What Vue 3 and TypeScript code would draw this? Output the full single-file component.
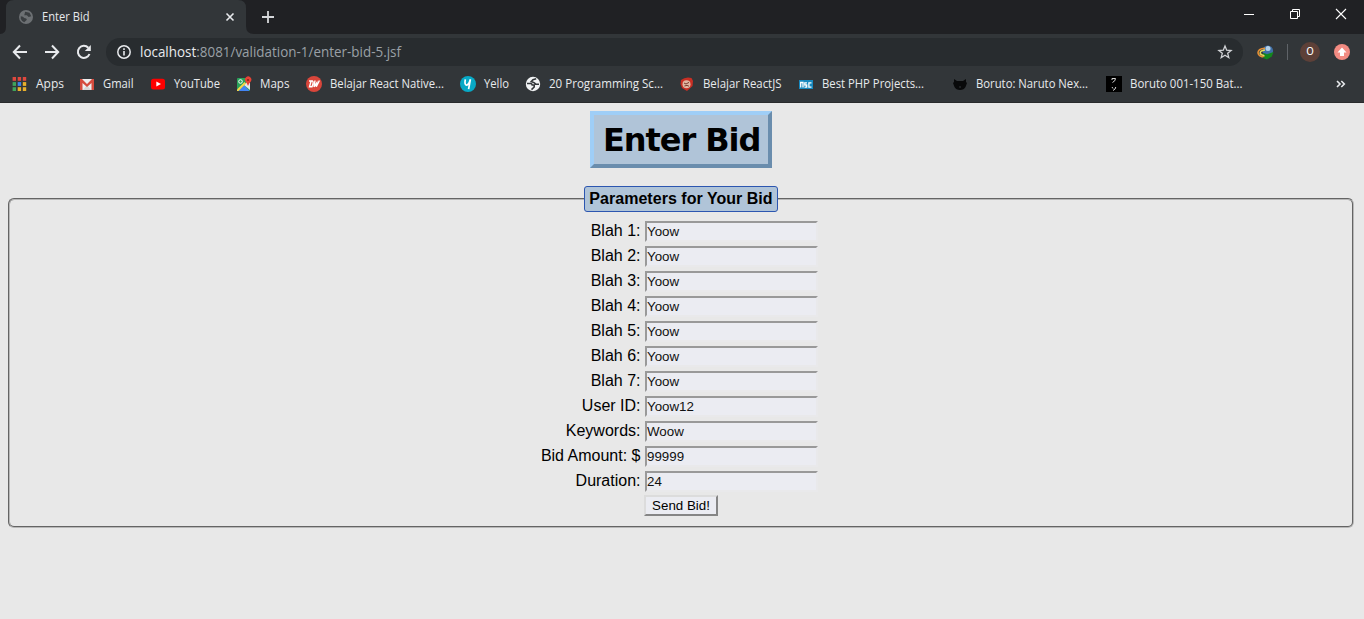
<script setup lang="ts">
import { reactive } from 'vue'

interface Bookmark {
  icon: string
  label: string
  width: number
  text: number
}

interface Field {
  label: string
  value: string
}

const bookmarks: Bookmark[] = [
  { icon: 'apps', label: 'Apps', width: 68, text: 28 },
  { icon: 'gmail', label: 'Gmail', width: 71, text: 30.5 },
  { icon: 'youtube', label: 'YouTube', width: 86, text: 46 },
  { icon: 'maps', label: 'Maps', width: 70, text: 29.5 },
  { icon: 'dw', label: 'Belajar React Native...', width: 154, text: 114 },
  { icon: 'yello', label: 'Yello', width: 65, text: 25 },
  { icon: 'globe', label: '20 Programming Sc...', width: 154, text: 114 },
  { icon: 'react', label: 'Belajar ReactJS', width: 119, text: 78.5 },
  { icon: 'nsc', label: 'Best PHP Projects...', width: 154, text: 102 },
  { icon: 'cat', label: 'Boruto: Naruto Nex...', width: 154, text: 112 },
  { icon: 'kana', label: 'Boruto 001-150 Bat...', width: 154, text: 112.5 },
]

const fields = reactive<Field[]>([
  { label: 'Blah 1:', value: 'Yoow' },
  { label: 'Blah 2:', value: 'Yoow' },
  { label: 'Blah 3:', value: 'Yoow' },
  { label: 'Blah 4:', value: 'Yoow' },
  { label: 'Blah 5:', value: 'Yoow' },
  { label: 'Blah 6:', value: 'Yoow' },
  { label: 'Blah 7:', value: 'Yoow' },
  { label: 'User ID:', value: 'Yoow12' },
  { label: 'Keywords:', value: 'Woow' },
  { label: 'Bid Amount: $', value: '99999' },
  { label: 'Duration:', value: '24' },
])

const appColors = ['#e0483e', '#e0483e', '#e0483e', '#3fa45b', '#3b83e8', '#e8b02c', '#3fa45b', '#e8b02c', '#e8b02c']
</script>

<template>
  <div class="window">
    <header class="chrome">
      <div class="tabstrip">
        <svg class="tab-shape" width="254" height="34" viewBox="0 0 254 34">
          <path d="M0 34Q6 34 6 27V8Q6 0 14 0H238Q246 0 246 8V26Q246 34 254 34Z" fill="#323639" />
        </svg>
        <div class="tab">
          <svg class="tab-icon" width="14" height="14" viewBox="0 0 16 16">
            <circle cx="8" cy="8" r="8" fill="#6c7073" />
            <path d="M2 7Q5 7 6 9Q9 9 9 11L6 14Q3 13 2 10ZM7 2L12 3L14 7L11 8L9 6L6 6Z" fill="#3a3e41" />
          </svg>
          <svg class="tab-title" width="56" height="20"><text x="0" y="14" textLength="47.5" lengthAdjust="spacingAndGlyphs">Enter Bid</text></svg>
          <svg class="tab-close" width="8" height="8" viewBox="0 0 8 8"><path d="M.5 .5L7.5 7.5M7.5 .5L.5 7.5" stroke="#e8eaed" stroke-width="1.6" /></svg>
        </div>
        <svg class="new-tab" width="12" height="12" viewBox="0 0 12 12"><path d="M6 0V12M0 6H12" stroke="#d5d7da" stroke-width="1.8" /></svg>
        <div class="window-buttons">
          <svg width="12" height="12" viewBox="0 0 12 12"><path d="M1 6.5H11" stroke="#fff" /></svg>
          <svg width="12" height="12" viewBox="0 0 12 12"><path d="M1.5 3.5H8.5V10.5H1.5ZM3.5 3V1.5H10.5V8.5H9" fill="none" stroke="#fff" /></svg>
          <svg width="12" height="12" viewBox="0 0 12 12"><path d="M1 1L11 11M11 1L1 11" stroke="#fff" stroke-width="1.1" /></svg>
        </div>
      </div>

      <div class="toolbar">
        <div class="nav">
          <svg width="16" height="16" viewBox="0 0 16 16"><path d="M15 8H2M8 1.5L1.8 8L8 14.5" /></svg>
          <svg width="16" height="16" viewBox="0 0 16 16"><path d="M1 8H14M8 1.5L14.2 8L8 14.5" /></svg>
          <svg width="16" height="16" viewBox="0 0 16 16"><path d="M13.5 10A6 6 0 1 1 12.3 3.8" /><path d="M14.8 1V7H8.8Z" class="solid" /></svg>
        </div>
        <div class="address">
          <svg class="info" width="14" height="14" viewBox="0 0 14 14"><circle cx="7" cy="7" r="6.2" fill="none" stroke="#e8eaed" stroke-width="1.5" /><path d="M7 6V10.5M7 3.3V5" stroke="#e8eaed" stroke-width="1.6" /></svg>
          <svg class="url" width="280" height="24"><text x="0" y="17" textLength="261" lengthAdjust="spacingAndGlyphs"><tspan class="host">localhost</tspan>:8081/validation-1/enter-bid-5.jsf</text></svg>
          <svg class="star" width="14" height="14" viewBox="0 0 14 14"><path d="M7 1L8.7 5.2L13.1 5.5L9.7 8.3L10.8 12.7L7 10.3L3.2 12.7L4.3 8.3L.9 5.5L5.3 5.2Z" fill="none" stroke="#d2d4d7" stroke-width="1.3" /></svg>
        </div>
        <svg class="idm" width="17" height="15" viewBox="0 0 17 15">
          <circle cx="10.8" cy="5.8" r="5.3" fill="#3f6fa6" /><circle cx="11" cy="3.5" r="2.5" fill="#b4d2ea" />
          <path d="M8 3.2Q1 3.6 1 7.8Q1.6 11.6 8 12" fill="none" stroke="#e58f35" stroke-width="1.6" />
          <path d="M8 5Q2.8 5.6 3.2 8.4Q4 10.4 8 10.4" fill="none" stroke="#e6dc5c" stroke-width="1.5" />
          <path d="M5.5 7.5L10 9.3L16.5 7L14.8 11.5L10 14.5L5.5 12.8L8 11.2Z" fill="#12881c" />
        </svg>
        <span class="divider"></span>
        <span class="avatar">O</span>
        <svg class="update" width="16" height="16" viewBox="0 0 16 16"><circle cx="8" cy="8" r="8" fill="#f28b82" /><path d="M8 3.5L12.5 8.5H10V12H6V8.5H3.5Z" fill="#fff" /></svg>
      </div>

      <nav class="bookmarks">
        <div v-for="item in bookmarks" :key="item.label" class="bookmark" :style="{ width: item.width + 'px' }">
          <svg class="favicon" width="16" height="16" viewBox="0 0 16 16">
            <template v-if="item.icon === 'apps'">
              <rect v-for="(color, i) in appColors" :key="i" :x="1.6 + (i % 3) * 5.1" :y="1 + Math.floor(i / 3) * 5.1" width="3.4" height="3.8" :fill="color" />
            </template>
            <template v-else-if="item.icon === 'gmail'">
              <rect x="1" y="3" width="14" height="11" fill="#eee" />
              <path d="M4 14L8 9L12 14Z" fill="#d5d5d5" />
              <path d="M1 3H3L8 8L13 3H15V14H12.5V7L8 11L3.5 7V14H1Z" fill="#d54b3d" />
            </template>
            <template v-else-if="item.icon === 'youtube'">
              <rect x="1" y="2.7" width="14" height="10.8" rx="2.5" fill="#f00" /><path d="M6.3 5.5L11 8L6.3 10.6Z" fill="#fff" />
            </template>
            <template v-else-if="item.icon === 'maps'">
              <rect x="1" y="2" width="13" height="13" rx="1" fill="#2aa15a" /><path d="M2.5 15L8 9L13.5 15Z" fill="#4285f4" /><path d="M8 9L12 5L14 7V14Z" fill="#e5e8ea" /><path d="M1 13.5L8.5 6L10 7.5L2.5 15H1Z" fill="#f6d64b" /><circle cx="4.5" cy="5.5" r="1.8" fill="none" stroke="#fff" />
              <path d="M12 10Q11 7 9.5 5.5A3.2 3.2 0 1 1 14.8 5.5Q13 7 12 10Z" fill="#e74335" /><circle cx="12" cy="4" r="1.1" fill="#8d241d" />
            </template>
            <template v-else-if="item.icon === 'dw'">
              <circle cx="8" cy="8" r="8" fill="#d9463b" /><path d="M3 5H6.5Q8 6 6 10.8H3.5L5 5.5M9 4.5L8 10.8L10.6 7L10.3 10.8L13.4 4.5" fill="none" stroke="#fff" stroke-width="1.4" />
            </template>
            <template v-else-if="item.icon === 'yello'">
              <circle cx="8" cy="8" r="8" fill="#08a9c6" /><path d="M5.3 3.3Q4.3 9 6.5 9.2Q9 9 10.4 3.3L8.6 13.2" fill="none" stroke="#fff" stroke-width="1.7" />
            </template>
            <template v-else-if="item.icon === 'globe'">
              <circle cx="8" cy="8" r="7.2" fill="#f1f3f4" /><path d="M2 7.5H5.5Q7 7.6 7.2 9H9.2V11L6.5 13.6M11.2 2.8L8 3.6L6.2 5.6L9 6.6L10.8 8.2H14" fill="none" stroke="#323639" stroke-width="1.6" />
            </template>
            <template v-else-if="item.icon === 'react'">
              <path d="M2 4Q5 1.5 9 1.5L12.5 2L14 5L13.5 10L8 15L3 12L1.5 8Z" fill="#c92f24" /><circle cx="7.5" cy="8.2" r="4" fill="#e0b8a4" /><path d="M5 7L7 8L10 6.4M5.4 10L8 9.4L10 10.2" fill="none" stroke="#7c3a2c" />
            </template>
            <template v-else-if="item.icon === 'nsc'">
              <rect x="1" y="4" width="14" height="9" fill="#1788be" /><path d="M2.7 11.5V6.5H5V11.5M9 6.8H6.8V9H8.7V11.2H6.5M13.5 6.8H10.9V11.2H13.5" fill="none" stroke="#fff" stroke-width="1.3" />
            </template>
            <template v-else-if="item.icon === 'cat'">
              <path d="M2 3L5 5H11L14 3V6L15 7L13.5 11Q12 14 8 14Q4 14 2.5 11L1 7L2 6Z" fill="#08090a" /><path d="M7.3 11H8.8" stroke="#43484b" />
            </template>
            <template v-else>
              <rect width="16" height="16" fill="#000" /><path d="M6 4V2.5H9.5Q9.5 5 6.5 6.5M6 11L7 12.5M9.8 11Q9.5 13.5 7 14.5" fill="none" stroke="#d5d5d5" />
            </template>
          </svg>
          <svg class="bookmark-label" :width="item.text + 6" height="20"><text x="0" y="14" :textLength="item.text" lengthAdjust="spacingAndGlyphs">{{ item.label }}</text></svg>
        </div>
        <svg class="more" width="10" height="8" viewBox="0 0 10 8"><path d="M1 1L4 4L1 7M5.3 1L8.3 4L5.3 7" fill="none" stroke="#e8eaed" stroke-width="1.6" /></svg>
      </nav>
    </header>

    <main class="page">
      <h1>Enter Bid</h1>
      <fieldset>
        <legend>Parameters for Your Bid</legend>
        <form @submit.prevent>
          <template v-for="(field, i) in fields" :key="field.label">
            <label :for="'field-' + i">{{ field.label }}</label>
            <input :id="'field-' + i" v-model="field.value" type="text" spellcheck="false" />
          </template>
          <button type="submit">Send Bid!</button>
        </form>
      </fieldset>
    </main>
  </div>
</template>

<style>
body {
  background: #e8e8e8;
  overflow: hidden;
}
</style>

<style scoped>
.window {
  width: 1364px;
  height: 619px;
  overflow: hidden;
  background: #e8e8e8;
  font-family: "Liberation Sans", Arial, sans-serif;
}
svg {
  display: block;
  flex: none;
  overflow: visible;
}
.chrome {
  box-sizing: border-box;
  height: 103px;
  background: #323639;
  border-bottom: 1px solid #292a2c;
}
.chrome text {
  font-family: "Open Sans", "Noto Sans", sans-serif;
  font-size: 12px;
  fill: #e8eaed;
}
.tabstrip {
  position: relative;
  display: flex;
  height: 34px;
  background: #202124;
}
.tab-shape {
  position: absolute;
  left: 0;
  top: 0;
}
.tab {
  position: relative;
  box-sizing: border-box;
  display: flex;
  align-items: center;
  width: 246px;
  padding: 0 12px 0 19px;
}
.tab-title {
  margin-left: 9px;
}
.tab-close {
  margin-left: auto;
  margin-right: 0;
}
.new-tab {
  margin: 11px 0 0 16px;
}
.window-buttons {
  display: flex;
  gap: 34px;
  margin: 8px 17px 0 auto;
}
.toolbar {
  display: flex;
  align-items: center;
  height: 36px;
}
.nav {
  display: flex;
  gap: 16px;
  margin-left: 12px;
}
.nav path {
  fill: none;
  stroke: #e8eaed;
  stroke-width: 2;
}
.nav .solid {
  fill: #e8eaed;
  stroke: none;
}
.address {
  box-sizing: border-box;
  display: flex;
  align-items: center;
  width: 1137px;
  height: 28px;
  margin-left: 14px;
  padding: 0 11px;
  border-radius: 14px;
  background: #282c2f;
}
.url {
  margin-left: 9px;
}
.address text {
  font-size: 13.6px;
  fill: #9aa0a6;
}
.address .host {
  fill: #e8eaed;
}
.star {
  margin-left: auto;
}
.idm {
  margin-left: 14px;
}
.divider {
  width: 1px;
  height: 16px;
  margin-left: 13px;
  background: #5f6368;
}
.avatar {
  width: 20px;
  height: 20px;
  margin-left: 12px;
  border-radius: 50%;
  background: #5d4038;
  color: #fff;
  font: 11px/20px Roboto, sans-serif;
  text-align: center;
}
.update {
  margin-left: 14px;
}
.bookmarks {
  display: flex;
  align-items: center;
  height: 28px;
  padding-left: 11px;
}
.bookmark {
  display: flex;
  align-items: center;
  gap: 8px;
  flex: none;
}
.bookmark:first-child {
  gap: 9px;
}
.more {
  margin-left: 76px;
}
.page {
  width: 1346px;
  margin-left: 8px;
  padding-top: 8px;
}
h1 {
  box-sizing: border-box;
  width: 182px;
  height: 57px;
  margin: 0 auto;
  padding-left: 9px;
  border: 4px solid;
  border-color: #9fcef7 #6a8dad #6a8dad #9fcef7;
  background: #b0c4d8;
  color: #000;
  font: bold 32px/51px "DejaVu Sans", Verdana, sans-serif;
  letter-spacing: -1.05px;
  white-space: nowrap;
}
fieldset {
  box-sizing: border-box;
  height: 342px;
  min-width: 0;
  margin: 18px 0 0;
  padding: 0;
  border: 2px groove #b8b8b8;
  border-radius: 6px;
}
legend {
  box-sizing: border-box;
  width: 194px;
  height: 26px;
  margin: 0 auto;
  padding: 0;
  border: 1px solid #2c56b0;
  border-radius: 3px;
  background: #b0c4d8;
  font-weight: bold;
  font-size: 16px;
  line-height: 24px;
  letter-spacing: 0.03px;
  text-align: center;
  white-space: nowrap;
}
form {
  display: grid;
  grid-template-columns: 631px 173px;
  grid-auto-rows: 21px;
  gap: 4px;
  padding-top: 9px;
}
label {
  padding-right: 0.5px;
  color: #000;
  font-size: 16px;
  line-height: 19px;
  text-align: right;
}
input {
  box-sizing: border-box;
  width: 173px;
  height: 21px;
  margin: 0;
  padding: 0;
  border: 2px solid;
  border-color: #999 #e9e9eb #e9e9eb #999;
  border-radius: 0;
  outline: none;
  background: #ebecf2;
  color: #111;
  font: 13.333px "Liberation Sans", Arial, sans-serif;
}
button {
  grid-column: 2;
  box-sizing: border-box;
  width: 74px;
  height: 21px;
  margin: -1px 0 0 -1px;
  padding: 0;
  border: 2px solid;
  border-color: #dcdcdc #858585 #858585 #dcdcdc;
  border-radius: 0;
  background: #ebecf2;
  color: #000;
  font: 13.333px "Liberation Sans", Arial, sans-serif;
}
</style>
